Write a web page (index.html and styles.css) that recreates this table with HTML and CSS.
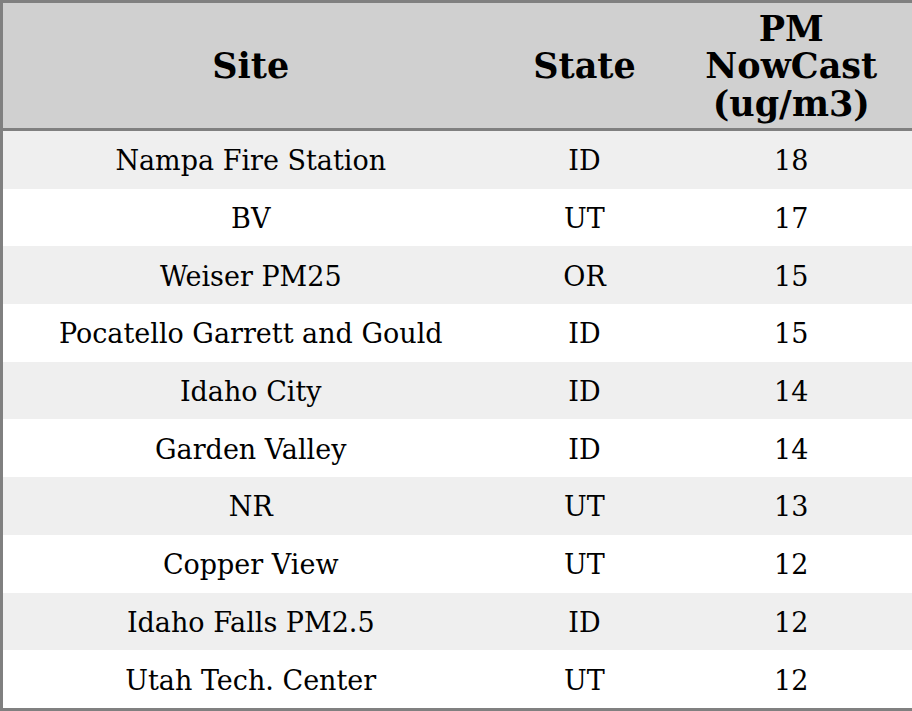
FILE: index.html
```html
<!DOCTYPE html>
<html>
<head>
<meta charset="utf-8">
<link rel="stylesheet" href="styles.css">
</head>
<body>
<table class="aq">
  <colgroup>
    <col class="c-site">
    <col class="c-state">
    <col class="c-pm">
  </colgroup>
  <thead>
    <tr><th>Site</th><th>State</th><th>PM NowCast (ug/m3)</th></tr>
  </thead>
  <tbody>
    <tr><td>Nampa Fire Station</td><td>ID</td><td>18</td></tr>
    <tr><td>BV</td><td>UT</td><td>17</td></tr>
    <tr><td>Weiser PM25</td><td>OR</td><td>15</td></tr>
    <tr><td>Pocatello Garrett and Gould</td><td>ID</td><td>15</td></tr>
    <tr><td>Idaho City</td><td>ID</td><td>14</td></tr>
    <tr><td>Garden Valley</td><td>ID</td><td>14</td></tr>
    <tr><td>NR</td><td>UT</td><td>13</td></tr>
    <tr><td>Copper View</td><td>UT</td><td>12</td></tr>
    <tr><td>Idaho Falls PM2.5</td><td>ID</td><td>12</td></tr>
    <tr><td>Utah Tech. Center</td><td>UT</td><td>12</td></tr>
  </tbody>
</table>
</body>
</html>
```
FILE: styles.css
```css
html, body {
  margin: 0;
  padding: 0;
  background: #ffffff;
}
.aq {
  width: 912px;
  height: 711px;
  border-collapse: collapse;
  table-layout: fixed;
  border: 3px solid #808080;
  font-family: "DejaVu Serif", serif;
  color: #000;
}
.c-site { width: 497px; }
.c-state { width: 172px; }
.c-pm { width: 243px; }
.aq th {
  height: 124px;
  background: #d0d0d0;
  font-size: 35px;
  font-weight: bold;
  line-height: 37.5px;
  text-align: center;
  vertical-align: middle;
  padding: 1px 24px 0;
  border-bottom: 3px solid #808080;
}
.aq td {
  height: 55.7px;
  font-size: 27px;
  text-align: center;
  vertical-align: middle;
  padding: 2px 0 0;
}
.aq tbody tr:nth-child(odd) td {
  background: #efefef;
}
.aq tbody tr:nth-child(even) td {
  background: #ffffff;
}
```
